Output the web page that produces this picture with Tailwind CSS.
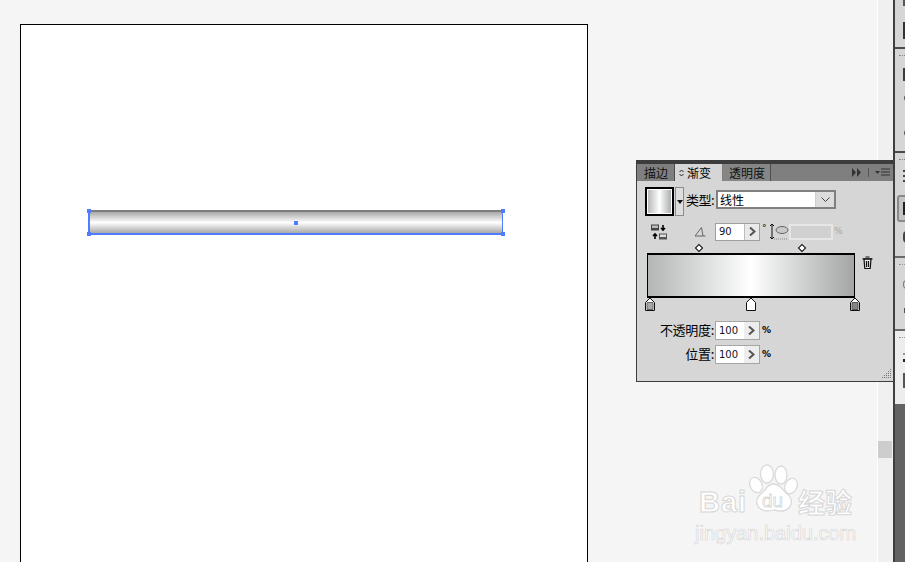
<!doctype html>
<html>
<head>
<meta charset="utf-8">
<script src="https://cdn.jsdelivr.net/npm/@tailwindcss/browser@4"></script>
</head>
<body class="m-0 overflow-hidden">
<div class="relative flex h-[562px] w-[905px] overflow-hidden bg-[#f5f5f5] font-['Noto_Sans_CJK_SC','Liberation_Sans',sans-serif]">

  <!-- canvas -->
  <main class="h-full w-[877px] pl-[20px] pt-[24px]">
    <section class="relative h-[600px] w-[568px] border border-black bg-white">
      <!-- selected object -->
      <div class="absolute left-[67px] top-[185px] h-[25px] w-[415px] border-t-2 border-b-2 border-l-2 border-r border-t-[#7d7d7d] border-r-[#4f7dff] border-b-[#4f7dff] border-l-[#4f7dff] bg-linear-to-b from-[#a9a9a9] via-white to-[#a9a9a9]"></div>
      <span class="absolute left-[66px] top-[184px] size-[4px] bg-[#4f7dff]"></span>
      <span class="absolute left-[480px] top-[184px] size-[4px] bg-[#4f7dff]"></span>
      <span class="absolute left-[66px] top-[207px] size-[4px] bg-[#4f7dff]"></span>
      <span class="absolute left-[480px] top-[207px] size-[4px] bg-[#4f7dff]"></span>
      <span class="absolute left-[273px] top-[196px] size-[4px] bg-[#4f7dff]"></span>
    </section>
  </main>

  <!-- scrollbar -->
  <div class="h-full w-[16px] border-l border-white bg-[#f0f0f0] pt-[441px]">
    <div class="h-[17px] w-[14px] bg-[#cdcdcd]"></div>
  </div>

  <!-- right dock -->
  <aside class="flex h-full w-[12px] flex-col overflow-hidden border-l-2 border-[#3f3f3f] bg-[#636363]">
    <div class="relative h-[49px] shrink-0 border-b-2 border-[#4a4a4a] bg-[#d6d6d6]">
      <span class="absolute left-[8px] top-0 h-[6px] w-[3px] bg-[#555]"></span>
      <span class="absolute left-[8px] top-[22px] h-[17px] w-[4px] border-2 border-[#333] bg-white"></span>
    </div>
    <div class="relative h-[104px] shrink-0 border-b-2 border-[#4a4a4a] bg-[#d6d6d6]">
      <span class="absolute left-[4px] top-[5px] h-[2px] w-[8px] border-b border-dotted border-[#888]"></span>
      <span class="absolute left-[8px] top-[19px] h-[13px] w-[4px] bg-[#3c3c3c]"></span>
      <span class="absolute left-[9px] top-[46px] h-[6px] w-[3px] rounded-l-full bg-[#555]"></span>
      <span class="absolute left-[9px] top-[81px] h-[6px] w-[3px] rounded-l-full bg-[#555]"></span>
    </div>
    <div class="relative h-[105px] shrink-0 border-b-2 border-[#6a6a6a] bg-[#d6d6d6]">
      <span class="absolute left-[4px] top-[5px] h-[2px] w-[8px] border-b border-dotted border-[#888]"></span>
      <span class="absolute left-[8px] top-[17px] h-[2px] w-[4px] bg-[#444]"></span>
      <span class="absolute left-[8px] top-[22px] h-[2px] w-[4px] bg-[#444]"></span>
      <span class="absolute left-[8px] top-[27px] h-[2px] w-[4px] bg-[#444]"></span>
      <span class="absolute left-[2px] top-[42px] h-[27px] w-[12px] rounded-[3px] border-2 border-[#8a8a8a] bg-[#c4c4c4]"></span>
      <span class="absolute left-[8px] top-[49px] h-[13px] w-[4px] border-2 border-[#222] bg-white"></span>
      <span class="absolute left-[8px] top-[78px] h-[12px] w-[4px] rounded-l-full bg-[#444]"></span>
    </div>
    <div class="relative h-[73px] shrink-0 border-b-2 border-[#6a6a6a] bg-[#d6d6d6]">
      <span class="absolute left-[4px] top-[5px] h-[2px] w-[8px] border-b border-dotted border-[#999]"></span>
      <span class="absolute left-[8px] top-[22px] h-[9px] w-[4px] rounded-l-full border border-[#777]"></span>
      <span class="absolute left-[9px] top-[50px] h-[5px] w-[3px] border border-[#555] bg-white"></span>
    </div>
    <div class="relative h-[73px] shrink-0 bg-[#ededed]">
      <span class="absolute left-[4px] top-[5px] h-[2px] w-[8px] border-b border-dotted border-[#999]"></span>
      <span class="absolute left-[8px] top-[22px] h-[2px] w-[4px] bg-[#999]"></span>
      <span class="absolute left-[8px] top-[28px] h-[3px] w-[4px] bg-[#222]"></span>
      <span class="absolute left-[8px] top-[42px] h-[15px] w-[4px] border-2 border-[#555] bg-white"></span>
    </div>
  </aside>

  <!-- gradient panel (floating) -->
  <section class="absolute left-[636px] top-[160px] h-[222px] w-[257px] border-b border-l border-[#3c3c3c] bg-[#d6d6d6] text-[12px] leading-none text-black">
    <div class="h-[4px] bg-[#3c3c3c]"></div>
    <!-- tabs -->
    <div class="flex h-[17px] items-stretch bg-[#7f7f7f]">
      <div class="flex w-[38px] items-center justify-center border-r border-[#4d4d4d] pl-[1px] text-[#111]">描边</div>
      <div class="flex w-[47px] items-center bg-[#d6d6d6] pl-[4px]">
        <svg class="mr-[3px] h-[8px] w-[5px]" viewBox="0 0 5 8"><path d="M.500 3l2-2 2 2M.500 5l2 2 2-2" fill="none" stroke="#222"/></svg>渐变
      </div>
      <div class="ml-[1px] flex w-[48px] items-center justify-center border-r border-[#4d4d4d] bg-[#868686] pl-[1px] text-[#111]">透明度</div>
      <div class="ml-auto flex items-center pr-[3px]">
        <svg class="mr-[7px] h-[9px] w-[9px]" viewBox="0 0 9 9"><path d="M0 0l4 4.500-4 4.500zM5 0l4 4.500-4 4.500z" fill="#333"/></svg>
        <span class="mr-[6px] h-[9px] w-px bg-[#555]"></span>
        <svg class="h-[9px] w-[15px]" viewBox="0 0 15 9"><path d="M0 3h5l-2.500 3z" fill="#333"/><path d="M6 1h9M6 4h9M6 7h9" stroke="#333" stroke-width="1.200"/></svg>
      </div>
    </div>

    <!-- type row -->
    <div class="mt-[6px] flex h-[29px] pl-[8px]">
      <div class="h-[29px] w-[29px] border-2 border-black bg-linear-to-r from-[#b2b4b4] via-white to-[#a6a8a8] outline outline-white -outline-offset-3"></div>
      <div class="ml-[1px] flex h-[29px] w-[9px] items-center justify-center border border-[#8c8c8c] bg-[#dedede]">
        <svg class="h-[4px] w-[6px]" viewBox="0 0 6 4"><path d="M0 0h6l-3 4z" fill="#111"/></svg>
      </div>
      <span class="ml-[2px] mt-[5px] h-[15px] w-[30px] whitespace-nowrap text-[13px] leading-[15px] tracking-[-0.5px]">类型:</span>
      <div class="mt-[3px] flex h-[19px] w-[120px] border-2 border-[#808080] bg-[#dcdcdc]">
        <div class="flex w-[98px] items-center border-r border-[#cfcfcf] bg-white pl-[2px] text-[12px]">线性</div>
        <div class="flex flex-1 items-center justify-center">
          <svg class="h-[5px] w-[9px]" viewBox="0 0 9 5"><path d="M.500.500l4 4 4-4" fill="none" stroke="#444"/></svg>
        </div>
      </div>
    </div>

    <!-- angle row -->
    <div class="mt-[7px] flex h-[17px] items-center pl-[14px]">
      <svg class="h-[16px] w-[16px]" viewBox="0 0 16 16">
        <rect x="0" y="0.500" width="8" height="6" fill="#444"/><rect x="1" y="1.500" width="6" height="2.500" fill="#bbb"/>
        <path d="M12 1v5M10 4l2 2 2-2" fill="none" stroke="#000" stroke-width="1.600"/>
        <path d="M4 15v-5M2 12l2-2 2 2" fill="none" stroke="#000" stroke-width="1.600"/>
        <rect x="8" y="9.500" width="8" height="6" fill="#555"/><rect x="9" y="10.500" width="6" height="2.500" fill="#ddd"/>
      </svg>
      <svg class="ml-[28px] h-[10px] w-[11px]" viewBox="0 0 11 10"><path d="M0 9h10.500M0 9l6.500-8.500 1.500 8.500" fill="none" stroke="#666"/></svg>
      <div class="ml-[9px] flex h-[18px] w-[45px] border border-[#9f9f9f] bg-white">
        <span class="flex w-[28px] items-center pl-[3px] font-['DejaVu_Sans'] text-[10px] text-[#112]">90</span>
        <span class="flex flex-1 items-center justify-center border-l border-[#bdbdbd] bg-[#e9e9e9]">
          <svg class="h-[9px] w-[7px]" viewBox="0 0 7 9"><path d="M1 .500l4.500 4-4.500 4" fill="none" stroke="#555" stroke-width="2"/></svg>
        </span>
      </div>
      <span class="mb-[7px] ml-[2px] w-[8px] font-['DejaVu_Sans'] text-[9px]">°</span>
      <svg class="h-[18px] w-[19px]" viewBox="0 0 19 18">
        <path d="M2 2v13M0 3l2-2 2 2M0 14l2 2 2-2" fill="none" stroke="#111"/>
        <ellipse cx="12" cy="7" rx="6" ry="3.500" fill="#c9c9c9" stroke="#666"/>
        <path d="M4 16h14" stroke="#888" stroke-dasharray="1 1"/>
      </svg>
      <div class="h-[16px] w-[44px] border-2 border-[#e6e6e6] bg-[#d0d0d0]"></div>
      <span class="ml-[1px] font-['DejaVu_Sans'] text-[9px] text-[#a5a5a5]">%</span>
    </div>

    <!-- midpoint diamonds -->
    <div class="mt-[5px] flex h-[8px] pl-[59px]">
      <span class="h-[6px] w-[6px] rotate-45 border border-black bg-white"></span>
      <span class="ml-[97px] h-[6px] w-[6px] rotate-45 border border-black bg-white"></span>
    </div>

    <!-- gradient bar -->
    <div class="flex pl-[10px]">
      <div class="h-[45px] w-[208px] border-y-2 border-x border-black bg-linear-to-r from-[#b4b6b6] via-white to-[#a4a6a6]"></div>
      <svg class="ml-[7px] mt-[3px] h-[13px] w-[11px]" viewBox="0 0 11 13">
        <path d="M2 3h7l-.800 9.500H2.800z" fill="#e8e8e8" stroke="#111" stroke-width="1.200"/>
        <path d="M.500 2.800h10M3.500 1h4M4.500 5v6M6.500 5v6" stroke="#111" stroke-width="1.200" fill="none"/>
      </svg>
    </div>

    <!-- stops -->
    <div class="-mt-[1px] flex h-[14px] pl-[8px]">
      <svg class="h-[14px] w-[10px]" viewBox="0 0 10 14"><path d="M.500 5.500L5 1l4.500 4.500V13.500h-9z" fill="#fff" stroke="#111"/><path d="M2 5.500h6v7H2z" fill="#a8a8a8" stroke="#666"/></svg>
      <svg class="ml-[91px] h-[14px] w-[10px]" viewBox="0 0 10 14"><path d="M.500 5.500L5 1l4.500 4.500V13.500h-9z" fill="#fff" stroke="#111"/></svg>
      <svg class="ml-[94px] h-[14px] w-[10px]" viewBox="0 0 10 14"><path d="M.500 5.500L5 1l4.500 4.500V13.500h-9z" fill="#fff" stroke="#111"/><path d="M2 5.500h6v7H2z" fill="#868686" stroke="#555"/></svg>
    </div>

    <!-- opacity -->
    <div class="mt-[10px] flex h-[19px] items-center">
      <span class="mb-[2px] w-[77px] text-right text-[13px] tracking-[-0.3px]">不透明度:</span>
      <div class="ml-[1px] flex h-[19px] w-[45px] border border-[#a5a5a5] bg-white">
        <span class="flex w-[28px] items-center pl-[3px] font-['DejaVu_Sans'] text-[10px] text-[#112]">100</span>
        <span class="flex flex-1 items-center justify-center bg-[#ededed]"><svg class="h-[9px] w-[7px]" viewBox="0 0 7 9"><path d="M1 .500l4.500 4-4.500 4" fill="none" stroke="#555" stroke-width="2"/></svg></span>
      </div>
      <span class="ml-[2px] font-['DejaVu_Sans'] text-[9px] font-bold">%</span>
    </div>

    <!-- location -->
    <div class="mt-[5px] flex h-[19px] items-center">
      <span class="mb-[2px] w-[77px] text-right text-[13px] tracking-[-0.3px]">位置:</span>
      <div class="ml-[1px] flex h-[19px] w-[45px] border border-[#a5a5a5] bg-white">
        <span class="flex w-[28px] items-center pl-[3px] font-['DejaVu_Sans'] text-[10px] text-[#112]">100</span>
        <span class="flex flex-1 items-center justify-center bg-[#ededed]"><svg class="h-[9px] w-[7px]" viewBox="0 0 7 9"><path d="M1 .500l4.500 4-4.500 4" fill="none" stroke="#555" stroke-width="2"/></svg></span>
      </div>
      <span class="ml-[2px] font-['DejaVu_Sans'] text-[9px] font-bold">%</span>
    </div>

    <!-- resize grip -->
    <svg class="absolute bottom-[2px] right-[1px] h-[10px] w-[10px]" viewBox="0 0 10 10">
      <path d="M8 0h1v1H8zM6 2h1v1H6zM8 2h1v1H8zM4 4h1v1H4zM6 4h1v1H6zM8 4h1v1H8zM2 6h1v1H2zM4 6h1v1H4zM6 6h1v1H6zM8 6h1v1H8zM0 8h1v1H0zM2 8h1v1H2zM4 8h1v1H4zM6 8h1v1H6zM8 8h1v1H8z" fill="#777"/>
    </svg>
  </section>

  <!-- watermark -->
  <div class="pointer-events-none absolute left-[695px] top-[464px] h-[80px] w-[162px] font-['Liberation_Sans'] text-white">
    <svg class="absolute left-[53px] top-0 h-[54px] w-[54px]" viewBox="0 0 54 54" fill="#fff" stroke="#dadada" stroke-width="1.300">
      <ellipse cx="19" cy="10" rx="6.500" ry="9"/>
      <ellipse cx="33" cy="11" rx="6" ry="9"/>
      <ellipse cx="8" cy="21" rx="6" ry="8" transform="rotate(-25 8 21)"/>
      <ellipse cx="43" cy="22" rx="6" ry="8" transform="rotate(25 43 22)"/>
      <path d="M25 20c7 0 9 5 13 9 5 3 6 8 5 11-2 7-9 8-17 6-7 2-15 1-17-6-1-4 1-8 5-11 4-3 5-9 11-9z"/>
    </svg>
    <span class="absolute left-[4px] top-[22px] text-[29px] font-bold leading-[32px] tracking-[1px] [-webkit-text-stroke:1px_#d6d6d6]">Bai</span>
    <span class="absolute left-[67px] top-[27px] text-[19px] leading-[20px] [-webkit-text-stroke:0.8px_#d6d6d6]">du</span>
    <span class="absolute left-[103px] top-[23px] font-['Noto_Sans_CJK_SC'] text-[27px] font-bold leading-[30px] [-webkit-text-stroke:1px_#d6d6d6]">经验</span>
    <span class="absolute left-0 top-[58px] whitespace-nowrap text-[20px] leading-[22px] [-webkit-text-stroke:0.7px_#d8d8d8]">jingyan.baidu.com</span>
  </div>
</div>
</body>
</html>
